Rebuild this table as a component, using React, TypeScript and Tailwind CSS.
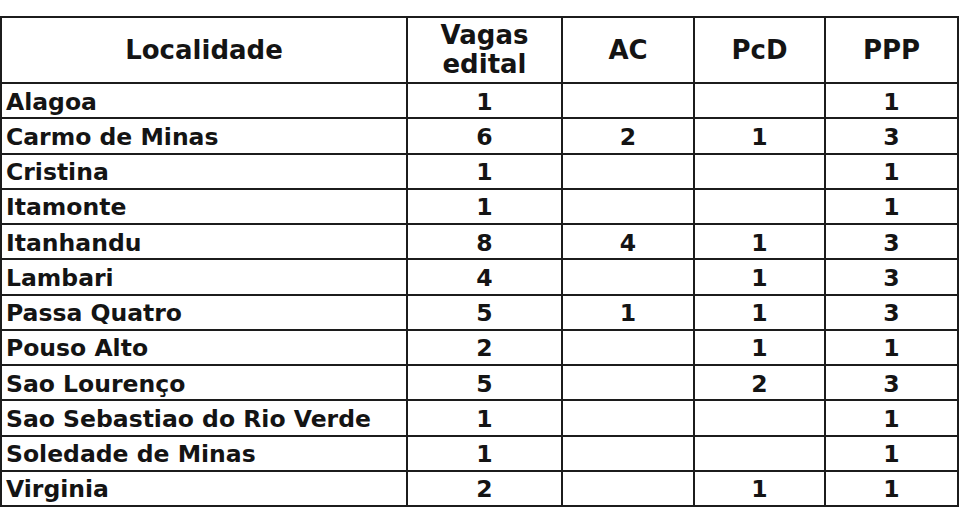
import React from 'react';

type Row = { local: string; vagas: string; ac: string; pcd: string; ppp: string };

const rows: Row[] = [
  { local: 'Alagoa', vagas: '1', ac: '', pcd: '', ppp: '1' },
  { local: 'Carmo de Minas', vagas: '6', ac: '2', pcd: '1', ppp: '3' },
  { local: 'Cristina', vagas: '1', ac: '', pcd: '', ppp: '1' },
  { local: 'Itamonte', vagas: '1', ac: '', pcd: '', ppp: '1' },
  { local: 'Itanhandu', vagas: '8', ac: '4', pcd: '1', ppp: '3' },
  { local: 'Lambari', vagas: '4', ac: '', pcd: '1', ppp: '3' },
  { local: 'Passa Quatro', vagas: '5', ac: '1', pcd: '1', ppp: '3' },
  { local: 'Pouso Alto', vagas: '2', ac: '', pcd: '1', ppp: '1' },
  { local: 'Sao Lourenço', vagas: '5', ac: '', pcd: '2', ppp: '3' },
  { local: 'Sao Sebastiao do Rio Verde', vagas: '1', ac: '', pcd: '', ppp: '1' },
  { local: 'Soledade de Minas', vagas: '1', ac: '', pcd: '', ppp: '1' },
  { local: 'Virginia', vagas: '2', ac: '', pcd: '1', ppp: '1' },
];

const cell = 'border-2 border-[#1c1c1c] text-center p-0';

export default function App() {
  return (
    <div className="w-[960px] h-[517px] bg-white pt-[16px] font-['DejaVu_Sans',sans-serif] font-bold text-[#141414] overflow-hidden">
      <table className="w-[957px] table-fixed border-collapse">
        <colgroup>
          <col className="w-[406px]" />
          <col className="w-[155px]" />
          <col className="w-[132px]" />
          <col className="w-[131px]" />
          <col className="w-[133px]" />
        </colgroup>
        <thead>
          <tr className="h-[66px] text-[26px] leading-[29px]">
            <th className={cell}>Localidade</th>
            <th className={cell}>
              Vagas
              <br />
              edital
            </th>
            <th className={cell}>AC</th>
            <th className={cell}>PcD</th>
            <th className={cell}>PPP</th>
          </tr>
        </thead>
        <tbody>
          {rows.map((r) => (
            <tr key={r.local} className="h-[35.25px] text-[23.5px] leading-[26px]">
              <td className={`${cell} text-left pl-[4px] pt-[2px]`}>{r.local}</td>
              <td className={`${cell} pt-[2px]`}>{r.vagas}</td>
              <td className={`${cell} pt-[2px]`}>{r.ac}</td>
              <td className={`${cell} pt-[2px]`}>{r.pcd}</td>
              <td className={`${cell} pt-[2px]`}>{r.ppp}</td>
            </tr>
          ))}
        </tbody>
      </table>
    </div>
  );
}
